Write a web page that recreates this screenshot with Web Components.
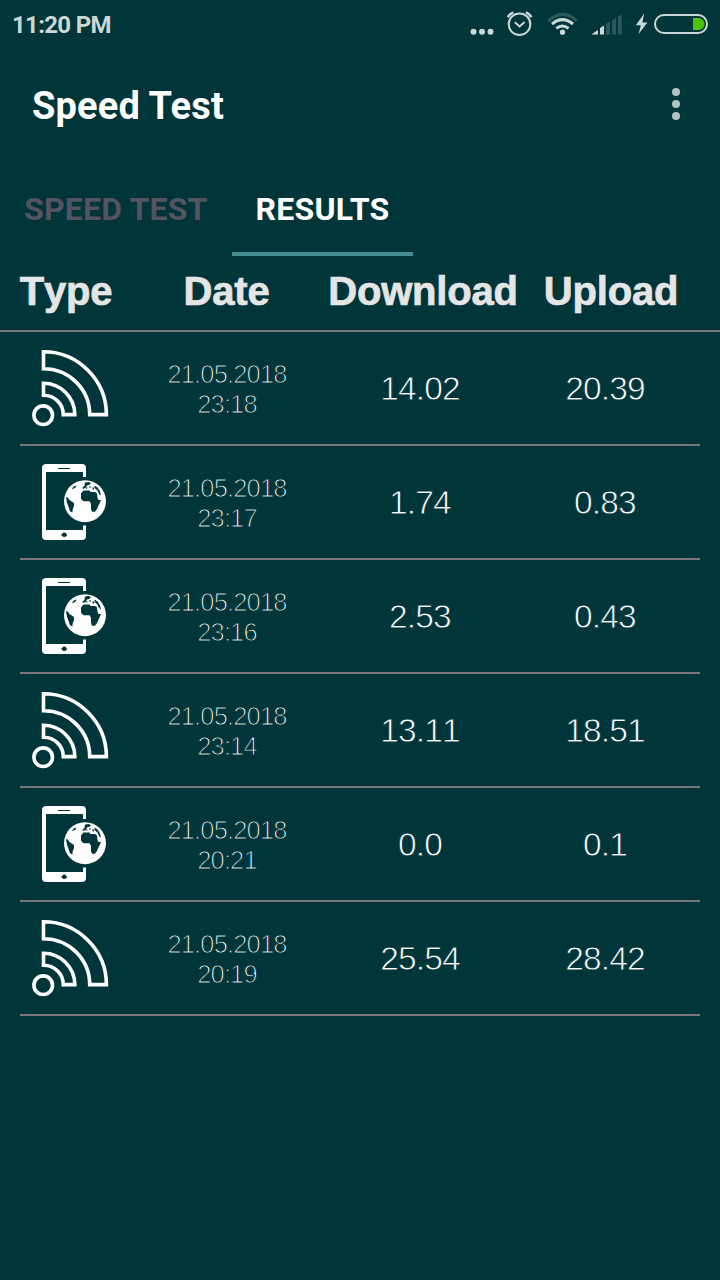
<!DOCTYPE html>
<html lang="en">
<head>
<meta charset="utf-8">
<title>Speed Test</title>
<style>
html, body { margin: 0; height: 100%; background: #003539; }
body { overflow: hidden; }
</style>
</head>
<body>
<speed-app></speed-app>
<script>
class Base extends HTMLElement {
  constructor() {
    super();
    this.attachShadow({ mode: 'open' }).innerHTML = this.render();
  }
}

customElements.define('status-bar', class extends Base {
  render() {
    return `<style>
      :host { display: flex; justify-content: space-between; height: 50px; box-sizing: border-box; padding-left: 12px; color: #ccd7d7; font: 700 24px/50px Roboto, sans-serif; }
      span { letter-spacing: -.68px; }
      svg { display: block; width: 260px; height: 50px; }
    </style>
    <span>11:20 PM</span>
    <svg viewBox="0 0 260 50" fill="none" stroke="#ccd7d7">
      <g fill="#ccd7d7" stroke="none"><circle cx="13.5" cy="31.7" r="3"/><circle cx="22" cy="31.7" r="3"/><circle cx="30.5" cy="31.7" r="3"/></g>
      <circle cx="59.5" cy="24.2" r="10.8" stroke-width="2"/>
      <path d="M54.8 22.2l4.8 4.2 5-4.5" stroke-width="2"/>
      <path d="M47.8 17.2q1.5-3.3 5.5-4.8M71.3 17.2q-1.5-3.3-5.5-4.8" stroke-width="2.4"/>
      <path d="M88.2 21.2q14.2-13.6 28.6 0" stroke="#2b585c" stroke-width="3.2"/>
      <path d="M92 24q10.4-8.8 21 0" stroke-width="3"/>
      <path d="M96.3 28.4q6-4.8 12.3 0" stroke-width="3"/>
      <circle cx="102.5" cy="32.2" r="2.6" fill="#ccd7d7" stroke="none"/>
      <g stroke="none"><path d="M132 34.5v-.5l6-4v4.5zM140 34.5v-6.5l4-2.5v9z" fill="#ccd7d7"/>
      <path d="M146 34.5v-10.7l4-2.3v13zM152 34.5V20.3l4-2.5v16.7zM158 34.5V16.8l3.7-2.6v20.3z" fill="#2b585c"/>
      <path d="M184.2 13.5l-8.4 11.800h5l-2.200 8.700 8.800-11.600h-5z" fill="#ccd7d7"/>
      <path d="M233 18h5.500a6 6 0 0 1 0 12H233z" fill="#49c400"/></g>
      <rect x="195" y="15" width="52" height="18" rx="9" stroke-width="2"/>
    </svg>`;
  }
});

customElements.define('title-bar', class extends Base {
  render() {
    return `<style>
      :host { display: flex; align-items: center; justify-content: space-between; height: 112px; box-sizing: border-box; padding: 0 40px 0 32px; color: #fff; font: 700 38px/112px Roboto, sans-serif; letter-spacing: .15px; }
      .more { display: grid; gap: 4px; margin-bottom: 4px; }
      i { display: block; width: 8px; height: 8px; border-radius: 50%; background: #b2c2c3; }
    </style><span><slot></slot></span><div class="more"><i></i><i></i><i></i></div>`;
  }
});

customElements.define('tab-item', class extends Base {
  render() {
    return `<style>
      :host { display: block; height: 94px; box-sizing: border-box; padding: 0 24px; color: #535362; font: 700 32px/94px Roboto, sans-serif; letter-spacing: .2px; white-space: nowrap; }
      :host([active]) { color: #fff; border-bottom: 4px solid #468e93; }
    </style><slot></slot>`;
  }
});

customElements.define('type-icon', class extends HTMLElement {
  connectedCallback() {
    const wifi = `<g fill="none" stroke="#fff" stroke-width="3.6">
      <circle cx="23.2" cy="75.2" r="9.3"/>
      <path d="M23.5 11.8c34.5 0 62.9 28.4 62.9 62.8H69.7c0-25.5-20.7-45.8-46.2-45.800z"/>
      <path d="M23.500 43.300c17.200 0 31.300 14 31.300 31.300H43.300c0-10.900-8.900-19.300-19.800-19.300z"/></g>`;
    const phone = `<path fill="#fff" d="M25.500 10h36.500a4 4 0 0 1 4 4v9h-3v-5H26v58h37v-4.500h3V82a4 4 0 0 1-4 4H26a4 4 0 0 1-4-4V14a4 4 0 0 1 3.500-4z"/>
      <path d="M38 14.500h12" stroke="#003539" stroke-width="1"/>
      <path d="M41.500 80.500l2-2h1.500l2 2v1l-2 1.500h-1.500l-2-1.500z" fill="#003539"/>
      <circle cx="65" cy="47.200" r="21" fill="#fff"/>
      <g fill="#003539">
        <path d="M46 43.300h1.500l2 2.700 4.500 3v3l-1.500 4v2.500l-2.500-1.200-1.500-4.500-1.500-4z"/>
        <path d="M61 39.500l2.500-3h6l1 1.500h4.500l2 1.500.5 4.500 1 2h2.500l-1.500 3.500-1.500 3-1 2.500-2 2.700h-3l-1-3v-5l-1.500-2.500h-6l-2.500-2.500z"/>
        <path d="M62.500 33.500l2-1.500.5-3.500 4-.5 2 1.500-2 1.500-2 .5-1 2-3 1.500z"/>
        <path d="M74.500 31.500l3 2 2.500 4 1 4-2-1.500-1.500-3.500-3-2.500z"/>
        <path d="M52 34.500l2.500-2.500 2-.5-1 2-2.500 1.500z"/>
        <path d="M65.500 33.500h2v1h-2zM69 32.500h2v1h-2zM72.500 33.500h1.500v2h-1.500z"/>
      </g>`;
    this.attachShadow({ mode: 'open' }).innerHTML = `<style>
      :host { display: block; width: 100px; height: 100px; margin-top: 4px; } svg { display: block; }
    </style><svg width="100" height="100" viewBox="0 0 100 100">${this.getAttribute('kind') === 'wifi' ? wifi : phone}</svg>`;
  }
});

customElements.define('result-head', class extends Base {
  render() {
    return `<style>
      :host { display: grid; grid-template-columns: 132px 189px 204px 172px; height: 76px; box-sizing: border-box; border-bottom: 2px solid #7b7679; color: #e5e5e5; font: 700 40px/70px "Liberation Sans", sans-serif; font-kerning: none; text-align: center; white-space: nowrap; letter-spacing: -.2px; -webkit-text-stroke: .7px #e5e5e5; }
      span:first-child { letter-spacing: 0; }
    </style><span>Type</span><span>Date</span><span>Download</span><span>Upload</span>`;
  }
});

customElements.define('result-row', class extends HTMLElement {
  connectedCallback() {
    const a = n => this.getAttribute(n);
    this.attachShadow({ mode: 'open' }).innerHTML = `<style>
      :host { display: grid; grid-template-columns: 100px 214px 172px 198px; align-items: center; height: 114px; box-sizing: border-box; margin: 0 20px; border-bottom: 2px solid #7b7679; color: #fff; font: 33.5px "Liberation Sans", sans-serif; font-kerning: none; text-align: center; }
      .date { font-size: 25.5px; letter-spacing: -.85px; padding-top: 1px; -webkit-text-stroke: 1.1px #003539; }
      .date div { height: 30px; line-height: 30px; }
      .num { -webkit-text-stroke: .8px #003539; line-height: 40px; letter-spacing: -.85px; padding-top: 2px; }
    </style>
    <type-icon kind="${a('kind')}"></type-icon>
    <div class="date"><div>${a('date')}</div><div>${a('time')}</div></div>
    <div class="num">${a('down')}</div><div class="num">${a('up')}</div>`;
  }
});

customElements.define('speed-app', class extends Base {
  render() {
    return `<style>
      :host { display: block; width: 720px; height: 1280px; background: #003539; overflow: hidden; }
      nav { display: flex; height: 94px; }
    </style>
    <status-bar></status-bar>
    <title-bar>Speed Test</title-bar>
    <nav><tab-item>SPEED TEST</tab-item><tab-item active>RESULTS</tab-item></nav>
    <result-head></result-head>
    <result-row kind="wifi" date="21.05.2018" time="23:18" down="14.02" up="20.39"></result-row>
    <result-row kind="mobile" date="21.05.2018" time="23:17" down="1.74" up="0.83"></result-row>
    <result-row kind="mobile" date="21.05.2018" time="23:16" down="2.53" up="0.43"></result-row>
    <result-row kind="wifi" date="21.05.2018" time="23:14" down="13.11" up="18.51"></result-row>
    <result-row kind="mobile" date="21.05.2018" time="20:21" down="0.0" up="0.1"></result-row>
    <result-row kind="wifi" date="21.05.2018" time="20:19" down="25.54" up="28.42"></result-row>`;
  }
});
</script>
</body>
</html>
